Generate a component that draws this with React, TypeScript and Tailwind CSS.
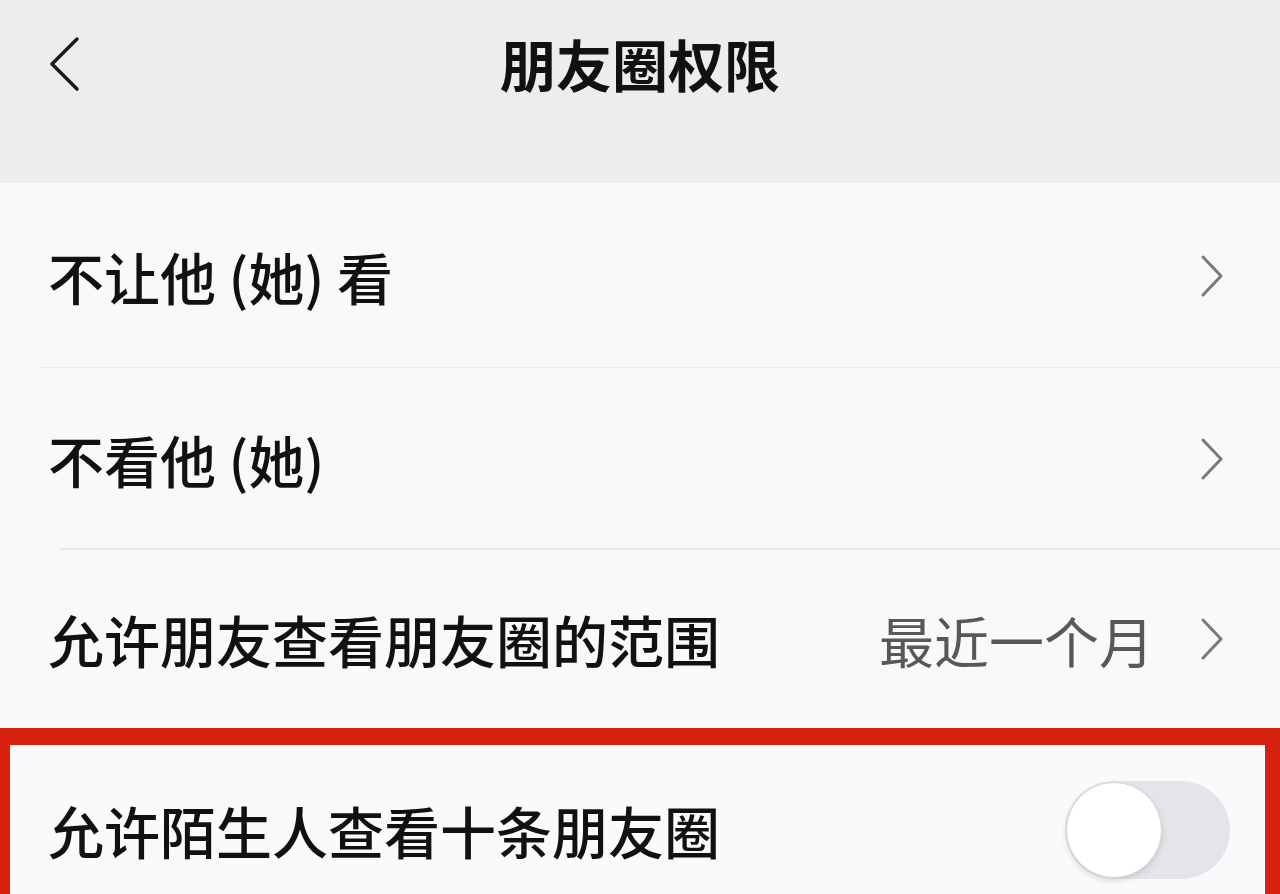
import React from "react";

const font = { fontFamily: '"Noto Sans CJK SC", "Noto Sans", sans-serif' };

function Chevron() {
  return (
    <svg width="24" height="42" viewBox="0 0 24 42" className="shrink-0">
      <polyline points="3,2 21,21 3,40" fill="none" stroke="#7a7a7c" strokeWidth="3" strokeLinecap="round" strokeLinejoin="round" />
    </svg>
  );
}

export default function App() {
  return (
    <div className="w-[1280px] h-[894px] overflow-hidden bg-[#f8f9fa] text-[#111]" style={font}>
      <div className="h-[183px] bg-[#ededf0] flex flex-col">
        <div className="relative h-[126px] flex items-center justify-center">
          <svg width="40" height="56" viewBox="0 0 40 56" className="absolute left-[44px] top-[36px]">
            <polyline points="33,3 8,28 33,53" fill="none" stroke="#1a1a1a" strokeWidth="3.5" strokeLinecap="round" strokeLinejoin="round" />
          </svg>
          <div className="text-[56px] font-semibold leading-none tracking-[0px] text-[#111]">朋友圈权限</div>
        </div>
      </div>

      <div className="h-[185px] flex items-center justify-between pl-[48px] pr-[56px] relative">
        <div className="text-[56px] font-medium leading-none">不让他 (她) 看</div>
        <Chevron />
        <div className="absolute left-[40px] right-0 bottom-0 h-px bg-[#ededef]" />
      </div>

      <div className="h-[182px] flex items-center justify-between pl-[48px] pr-[56px] relative">
        <div className="text-[56px] font-medium leading-none">不看他 (她)</div>
        <Chevron />
        <div className="absolute left-[60px] right-0 bottom-0 h-[2px] bg-[#e9e9eb]" />
      </div>

      <div className="h-[178px] flex items-center pl-[48px] pr-[56px]">
        <div className="text-[56px] font-medium leading-none flex-1">允许朋友查看朋友圈的范围</div>
        <div className="text-[55px] leading-none text-[#58585a] mr-[46px]">最近一个月</div>
        <Chevron />
      </div>

      <div className="border-t-[17px] border-l-[10px] border-r-[15px] border-[#d8200f] bg-[#f9fafb]">
        <div className="h-[170px] flex items-center justify-between pl-[38px] pr-[35px]">
          <div className="text-[56px] font-medium leading-none">允许陌生人查看十条朋友圈</div>
          <div className="w-[165px] h-[98px] rounded-full bg-[#e3e5e8] flex items-center p-[1px]">
            <div className="w-[96px] h-[96px] rounded-full bg-white border border-[#d4d6d9] shadow-[0_3px_6px_rgba(0,0,0,0.12)]" />
          </div>
        </div>
      </div>
    </div>
  );
}
